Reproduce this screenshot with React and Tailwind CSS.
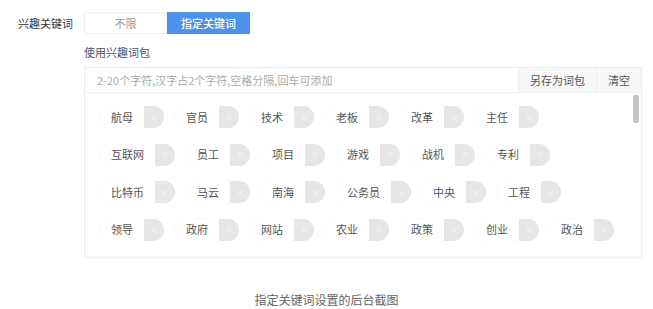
import React from 'react';

const font = { fontFamily: '"Noto Sans CJK SC", "Noto Sans", sans-serif' };

const rows = [
  ['航母', '官员', '技术', '老板', '改革', '主任'],
  ['互联网', '员工', '项目', '游戏', '战机', '专利'],
  ['比特币', '马云', '南海', '公务员', '中央', '工程'],
  ['领导', '政府', '网站', '农业', '政策', '创业', '政治'],
];

function Tag({ word }) {
  return (
    <div className="flex h-[22px] items-stretch">
      <span className="flex items-center rounded-l-full bg-white pl-[11px] pr-[11px] text-[11px] text-[#555] shadow-[0_0_2px_rgba(0,0,0,0.07)]">
        {word}
      </span>
      <span className="flex w-[20px] items-center justify-center rounded-r-full bg-[#e6e6e8] text-[9px] leading-none text-[#f6f6f6]">
        ×
      </span>
    </div>
  );
}

export default function App() {
  return (
    <div className="h-[309px] w-[653px] bg-white" style={font}>
      {/* 兴趣关键词 */}
      <div className="flex items-center pt-[12px]">
        <span className="w-[84px] pl-[18px] text-[11px] text-[#333]">兴趣关键词</span>
        <div className="flex h-[22px]">
          <button className="w-[83px] border border-[#f0f0f0] bg-white text-[11px] text-[#999]">不限</button>
          <button className="w-[83px] bg-[#4d92ea] text-[11px] font-medium text-white">指定关键词</button>
        </div>
      </div>

      <div className="ml-[84px] w-[558px]">
        <div className="pt-[9px] text-[11px] leading-[18px] text-[#4f4f6e]">使用兴趣词包</div>

        <div className="mt-[6px] border border-[#ededed]">
          {/* input row */}
          <div className="flex h-[25px] items-stretch border-b border-[#f0f0f0]">
            <span className="flex flex-1 items-center pl-[12px] text-[11px] text-[#aaa]">
              2-20个字符,汉字占2个字符,空格分隔,回车可添加
            </span>
            <button className="w-[78px] border-l border-[#ececec] bg-[#f8f8f8] text-[11px] text-[#555]">另存为词包</button>
            <button className="w-[45px] border-l border-[#ececec] bg-[#f8f8f8] text-[11px] text-[#555]">清空</button>
          </div>

          {/* tags */}
          <div className="relative flex h-[164px] flex-col gap-y-[15.5px] pl-[15px] pt-[13px]">
            {rows.map((row, i) => (
              <div key={i} className="flex gap-x-[11px]">
                {row.map((w) => (
                  <Tag key={w} word={w} />
                ))}
              </div>
            ))}
            <div className="absolute right-[2px] top-[2px] h-[28px] w-[6px] rounded-[2px] bg-[#c4c4c4]" />
          </div>
        </div>
      </div>

      <div className="pt-[33px] text-center text-[12px] text-[#666]">指定关键词设置的后台截图</div>
    </div>
  );
}
